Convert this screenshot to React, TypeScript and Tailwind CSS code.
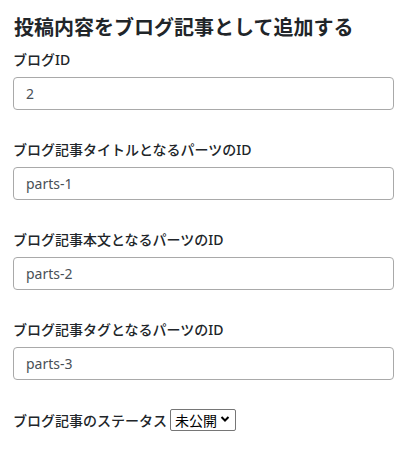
import React from "react";

const font = { fontFamily: '"Noto Sans", "Noto Sans CJK JP", sans-serif' };

function Field({ label, value }: { label: string; value: string }) {
  return (
    <div className="mb-[29px]">
      <label className="block text-[14px] leading-[21px] font-medium text-[#212529] mb-[7px]">{label}</label>
      <input
        readOnly
        value={value}
        className="block w-[381px] h-[33px] border border-[#a9a9a9] rounded-[4px] px-[12px] text-[14px] text-[#495057] bg-white outline-none"
      />
    </div>
  );
}

export default function App() {
  return (
    <div className="bg-white w-[408px] h-[454px] px-[13px] pt-[16px]" style={font}>
      <h1 className="text-[20px] leading-[24px] font-bold text-[#212529] mb-[9px] pl-[1px]">投稿内容をブログ記事として追加する</h1>
      <Field label="ブログID" value="2" />
      <Field label="ブログ記事タイトルとなるパーツのID" value="parts-1" />
      <Field label="ブログ記事本文となるパーツのID" value="parts-2" />
      <Field label="ブログ記事タグとなるパーツのID" value="parts-3" />
      <div className="flex items-center mt-[2px] h-[22px]">
        <span className="text-[14px] font-medium text-[#212529] mr-[3px]">ブログ記事のステータス</span>
        <div className="relative">
          <select className="appearance-none h-[22px] w-[66px] border border-[#767676] rounded-[2px] pl-[4px] pr-[14px] text-[14px] text-black bg-white">
            <option>未公開</option>
          </select>
          <svg className="absolute right-[6px] top-[7px] pointer-events-none" width="10" height="8" viewBox="0 0 10 8">
            <path d="M1.5 2 L5 5.5 L8.5 2" stroke="#000" strokeWidth="2" fill="none" />
          </svg>
        </div>
      </div>
    </div>
  );
}
